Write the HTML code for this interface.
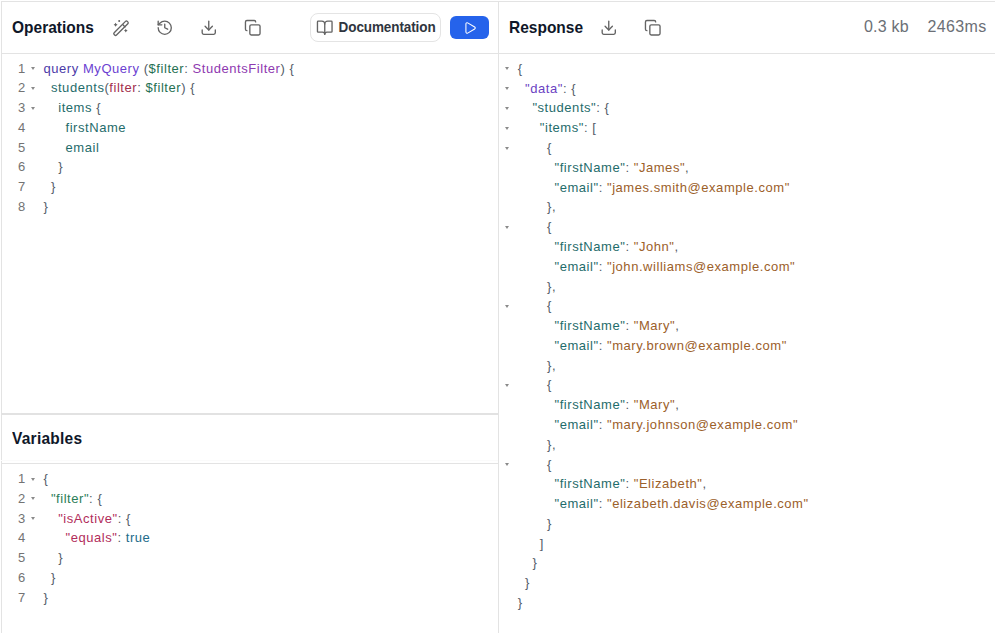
<!DOCTYPE html>
<html><head><meta charset="utf-8">
<style>
*{box-sizing:border-box;margin:0;padding:0}
html,body{width:995px;height:633px;overflow:hidden;background:#fff}
body{font-family:"Liberation Sans",sans-serif;position:relative}
.abs{position:absolute}
.bt{position:absolute;background:#e3e3e3}
.h{position:absolute;font-weight:bold;font-size:15.5px;color:#0f1729;line-height:20px;white-space:pre;transform:scaleY(1.1);transform-origin:0 15.4px}
.ic{position:absolute;width:18px;height:18px}
.ic svg{width:18px;height:18px;display:block}
.code{position:absolute;font-size:13px;line-height:19.75px;white-space:pre;letter-spacing:0.55px;color:#545c68}
.ln{position:absolute;font-size:13px;line-height:19.75px;color:#737373;text-align:right;width:20px;letter-spacing:0}
.fold{position:absolute;width:0;height:0;border-left:2.8px solid transparent;border-right:2.8px solid transparent;border-top:3.3px solid #8a8a8a}
.p{color:#545c68}
.kw{color:#4b3aa8}
.nm{color:#6b3fd1}
.var{color:#267052}
.ty{color:#8e39b0}
.fld{color:#1f6c6b}
.arg{color:#a3304d}
.str{color:#9c602a}
.jk{color:#1f6c6b}
.jd{color:#6b3fc2}
.vk{color:#2b7d58}
.vr{color:#b22d5b}
.tr{color:#226b8a}
.stat{position:absolute;font-size:15px;color:#6b6f76;line-height:20px;letter-spacing:0.6px;white-space:pre}
</style></head>
<body>
<!-- borders -->
<div class="bt" style="left:1px;top:1px;width:994px;height:1px"></div>
<div class="bt" style="left:1px;top:1px;width:1px;height:632px"></div>
<div class="bt" style="left:498px;top:1px;width:1px;height:632px"></div>
<div class="bt" style="left:1px;top:53px;width:994px;height:1px"></div>
<div class="bt" style="left:1px;top:413px;width:497px;height:2px;background:#e2e2e2"></div>
<div class="bt" style="left:1px;top:460px;width:497px;height:1px;background:#fbfbfb"></div>
<div class="bt" style="left:1px;top:463px;width:497px;height:1px"></div>

<!-- Operations header -->
<div class="h" style="left:12px;top:17.5px">Operations</div>

<!-- Documentation button -->
<div class="abs" style="left:310px;top:13px;width:131px;height:29px;border:1px solid #e4e4e4;border-radius:8px;background:#fff"></div>
<div class="abs" style="left:338.6px;top:17.5px;font-size:13.5px;font-weight:bold;color:#2f353e;letter-spacing:-0.1px;transform:scaleY(1.1);transform-origin:0 14.7px;line-height:20px;white-space:pre">Documentation</div>
<!-- run button -->
<div class="abs" style="left:450px;top:16px;width:39px;height:23px;border-radius:6px;background:#2563eb"></div>

<!-- Response header -->
<div class="h" style="left:509px;top:17.5px">Response</div>
<div class="stat" style="left:864px;top:16.8px;font-size:16px;letter-spacing:0.2px">0.3 kb</div>
<div class="stat" style="left:927.5px;top:16.8px;font-size:16px;letter-spacing:0.35px">2463ms</div>

<!-- Variables header -->
<div class="h" style="left:12px;top:429px;letter-spacing:0.25px">Variables</div>

<div class="ln" style="left:5.3px;top:58.52px">1</div>
<div class="fold" style="left:30.8px;top:67.00px"></div>
<div class="code" style="left:43.5px;top:58.52px"><span class="kw">query</span> <span class="nm">MyQuery</span> (<span class="var">$filter</span>: <span class="ty">StudentsFilter</span>) {</div>
<div class="ln" style="left:5.3px;top:78.27px">2</div>
<div class="fold" style="left:30.8px;top:86.75px"></div>
<div class="code" style="left:50.9px;top:78.27px"><span class="fld">students</span>(<span class="arg">filter</span>: <span class="var">$filter</span>) {</div>
<div class="ln" style="left:5.3px;top:98.02px">3</div>
<div class="fold" style="left:30.8px;top:106.50px"></div>
<div class="code" style="left:58.2px;top:98.02px"><span class="fld">items</span> {</div>
<div class="ln" style="left:5.3px;top:117.77px">4</div>
<div class="code" style="left:65.5px;top:117.77px"><span class="fld">firstName</span></div>
<div class="ln" style="left:5.3px;top:137.52px">5</div>
<div class="code" style="left:65.5px;top:137.52px"><span class="fld">email</span></div>
<div class="ln" style="left:5.3px;top:157.27px">6</div>
<div class="code" style="left:58.2px;top:157.27px">}</div>
<div class="ln" style="left:5.3px;top:177.02px">7</div>
<div class="code" style="left:50.9px;top:177.02px">}</div>
<div class="ln" style="left:5.3px;top:196.77px">8</div>
<div class="code" style="left:43.5px;top:196.77px">}</div>
<div class="ln" style="left:5.3px;top:469.12px">1</div>
<div class="fold" style="left:30.8px;top:477.60px"></div>
<div class="code" style="left:43.5px;top:469.12px">{</div>
<div class="ln" style="left:5.3px;top:488.87px">2</div>
<div class="fold" style="left:30.8px;top:497.35px"></div>
<div class="code" style="left:50.9px;top:488.87px"><span class="vk">&quot;filter&quot;</span>: {</div>
<div class="ln" style="left:5.3px;top:508.62px">3</div>
<div class="fold" style="left:30.8px;top:517.10px"></div>
<div class="code" style="left:58.2px;top:508.62px"><span class="vr">&quot;isActive&quot;</span>: {</div>
<div class="ln" style="left:5.3px;top:528.37px">4</div>
<div class="code" style="left:65.5px;top:528.37px"><span class="vr">&quot;equals&quot;</span>: <span class="tr">true</span></div>
<div class="ln" style="left:5.3px;top:548.12px">5</div>
<div class="code" style="left:58.2px;top:548.12px">}</div>
<div class="ln" style="left:5.3px;top:567.87px">6</div>
<div class="code" style="left:50.9px;top:567.87px">}</div>
<div class="ln" style="left:5.3px;top:587.62px">7</div>
<div class="code" style="left:43.5px;top:587.62px">}</div>
<div class="fold" style="left:504.8px;top:67.40px"></div>
<div class="code" style="left:517.7px;top:58.92px">{</div>
<div class="fold" style="left:504.8px;top:87.18px"></div>
<div class="code" style="left:525.1px;top:78.70px"><span class="jd">&quot;data&quot;</span>: {</div>
<div class="fold" style="left:504.8px;top:106.96px"></div>
<div class="code" style="left:532.4px;top:98.48px"><span class="jk">&quot;students&quot;</span>: {</div>
<div class="fold" style="left:504.8px;top:126.74px"></div>
<div class="code" style="left:539.8px;top:118.26px"><span class="jk">&quot;items&quot;</span>: [</div>
<div class="fold" style="left:504.8px;top:146.52px"></div>
<div class="code" style="left:547.1px;top:138.04px">{</div>
<div class="code" style="left:554.5px;top:157.82px"><span class="jk">&quot;firstName&quot;</span>: <span class="str">&quot;James&quot;</span>,</div>
<div class="code" style="left:554.5px;top:177.60px"><span class="jk">&quot;email&quot;</span>: <span class="str">&quot;james.smith@example.com&quot;</span></div>
<div class="code" style="left:547.1px;top:197.38px">},</div>
<div class="fold" style="left:504.8px;top:225.64px"></div>
<div class="code" style="left:547.1px;top:217.16px">{</div>
<div class="code" style="left:554.5px;top:236.94px"><span class="jk">&quot;firstName&quot;</span>: <span class="str">&quot;John&quot;</span>,</div>
<div class="code" style="left:554.5px;top:256.72px"><span class="jk">&quot;email&quot;</span>: <span class="str">&quot;john.williams@example.com&quot;</span></div>
<div class="code" style="left:547.1px;top:276.50px">},</div>
<div class="fold" style="left:504.8px;top:304.76px"></div>
<div class="code" style="left:547.1px;top:296.28px">{</div>
<div class="code" style="left:554.5px;top:316.06px"><span class="jk">&quot;firstName&quot;</span>: <span class="str">&quot;Mary&quot;</span>,</div>
<div class="code" style="left:554.5px;top:335.84px"><span class="jk">&quot;email&quot;</span>: <span class="str">&quot;mary.brown@example.com&quot;</span></div>
<div class="code" style="left:547.1px;top:355.62px">},</div>
<div class="fold" style="left:504.8px;top:383.88px"></div>
<div class="code" style="left:547.1px;top:375.40px">{</div>
<div class="code" style="left:554.5px;top:395.18px"><span class="jk">&quot;firstName&quot;</span>: <span class="str">&quot;Mary&quot;</span>,</div>
<div class="code" style="left:554.5px;top:414.96px"><span class="jk">&quot;email&quot;</span>: <span class="str">&quot;mary.johnson@example.com&quot;</span></div>
<div class="code" style="left:547.1px;top:434.74px">},</div>
<div class="fold" style="left:504.8px;top:463.00px"></div>
<div class="code" style="left:547.1px;top:454.52px">{</div>
<div class="code" style="left:554.5px;top:474.30px"><span class="jk">&quot;firstName&quot;</span>: <span class="str">&quot;Elizabeth&quot;</span>,</div>
<div class="code" style="left:554.5px;top:494.08px"><span class="jk">&quot;email&quot;</span>: <span class="str">&quot;elizabeth.davis@example.com&quot;</span></div>
<div class="code" style="left:547.1px;top:513.86px">}</div>
<div class="code" style="left:539.8px;top:533.64px">]</div>
<div class="code" style="left:532.4px;top:553.42px">}</div>
<div class="code" style="left:525.1px;top:573.20px">}</div>
<div class="code" style="left:517.7px;top:592.98px">}</div>
<!-- wand -->
<svg class="abs" style="left:112px;top:19px" width="18" height="18" viewBox="0 0 18 18" fill="none" stroke="#646464" stroke-width="1.35" stroke-linecap="round" stroke-linejoin="round">
  <rect x="-0.3" y="7.55" width="18.6" height="3.3" rx="1.3" transform="rotate(-45 9 9.2)"/>
  <path d="M10.7 5.6l2.3 2.3"/>
  <path fill="#646464" stroke="none" d="M3.60 3.80Q4.16 5.24 5.60 5.80Q4.16 6.36 3.60 7.80Q3.04 6.36 1.60 5.80Q3.04 5.24 3.60 3.80Z"/>
  <circle cx="7.2" cy="2.0" r="1.0" fill="#646464" stroke="none"/>
  <path fill="#646464" stroke="none" d="M13.80 9.70Q14.33 11.07 15.70 11.60Q14.33 12.13 13.80 13.50Q13.27 12.13 11.90 11.60Q13.27 11.07 13.80 9.70Z"/>
</svg>
<!-- history -->
<svg class="abs" style="left:156px;top:18.8px" width="17.5" height="17.5" viewBox="0 0 24 24" fill="none" stroke="#646464" stroke-width="1.85" stroke-linecap="round" stroke-linejoin="round">
  <path d="M3 12a9 9 0 1 0 9-9 9.75 9.75 0 0 0-6.74 2.74L3 8"/><path d="M3 3v5h5"/><path d="M12 7v5l4 2"/>
</svg>
<!-- download -->
<svg class="abs" style="left:200px;top:19px" width="17.5" height="17.5" viewBox="0 0 24 24" fill="none" stroke="#646464" stroke-width="1.85" stroke-linecap="round" stroke-linejoin="round">
  <path d="M21 15v4a2 2 0 0 1-2 2H5a2 2 0 0 1-2-2v-4"/><polyline points="7 10 12 15 17 10"/><line x1="12" x2="12" y1="15" y2="3"/>
</svg>
<!-- copy -->
<svg class="abs" style="left:244.2px;top:19px" width="17.5" height="17.5" viewBox="0 0 24 24" fill="none" stroke="#646464" stroke-width="1.85" stroke-linecap="round" stroke-linejoin="round">
  <rect width="14" height="14" x="8" y="8" rx="2" ry="2"/><path d="M4 16c-1.1 0-2-.9-2-2V4c0-1.1.9-2 2-2h10c1.1 0 2 .9 2 2"/>
</svg>
<!-- book -->
<svg class="abs" style="left:316.1px;top:18.6px" width="17.5" height="17.5" viewBox="0 0 24 24" fill="none" stroke="#646464" stroke-width="1.85" stroke-linecap="round" stroke-linejoin="round">
  <path d="M12 7v14"/><path d="M3 18a1 1 0 0 1-1-1V4a1 1 0 0 1 1-1h5a4 4 0 0 1 4 4 4 4 0 0 1 4-4h5a1 1 0 0 1 1 1v13a1 1 0 0 1-1 1h-6a3 3 0 0 0-3 3 3 3 0 0 0-3-3z"/>
</svg>
<!-- play -->
<svg class="abs" style="left:462.6px;top:20.7px" width="14" height="14" viewBox="0 0 24 24" fill="none" stroke="#fff" stroke-width="1.8" stroke-linecap="round" stroke-linejoin="round">
  <path d="M5 5a2 2 0 0 1 3.008-1.728l11.997 6.998a2 2 0 0 1 .003 3.458l-12 7A2 2 0 0 1 5 19z"/>
</svg>
<!-- response download -->
<svg class="abs" style="left:600px;top:19px" width="17.5" height="17.5" viewBox="0 0 24 24" fill="none" stroke="#646464" stroke-width="1.85" stroke-linecap="round" stroke-linejoin="round">
  <path d="M21 15v4a2 2 0 0 1-2 2H5a2 2 0 0 1-2-2v-4"/><polyline points="7 10 12 15 17 10"/><line x1="12" x2="12" y1="15" y2="3"/>
</svg>
<!-- response copy -->
<svg class="abs" style="left:644.2px;top:19px" width="17.5" height="17.5" viewBox="0 0 24 24" fill="none" stroke="#646464" stroke-width="1.85" stroke-linecap="round" stroke-linejoin="round">
  <rect width="14" height="14" x="8" y="8" rx="2" ry="2"/><path d="M4 16c-1.1 0-2-.9-2-2V4c0-1.1.9-2 2-2h10c1.1 0 2 .9 2 2"/>
</svg>

</body></html>
